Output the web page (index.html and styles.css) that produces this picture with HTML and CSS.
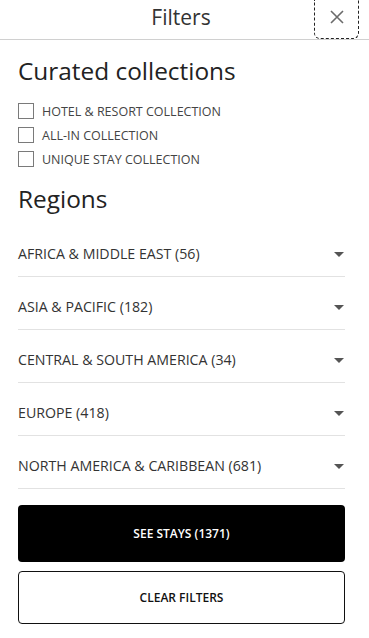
FILE: index.html
```html
<!DOCTYPE html>
<html lang="en">
<head>
<meta charset="utf-8">
<title>Filters</title>
<link rel="stylesheet" href="styles.css">
</head>
<body>
<div class="panel">
  <header class="header">
    <h1 class="title">Filters</h1>
    <button class="close" aria-label="Close">
      <svg width="14" height="14" viewBox="0 0 14 14"><path d="M1 1L13 13M13 1L1 13" stroke="#6b6b6b" stroke-width="1.6" fill="none"/></svg>
    </button>
  </header>
  <main class="content">
    <h2 class="heading">Curated collections</h2>
    <ul class="checks">
      <li class="check"><span class="box"></span><span class="check-label">HOTEL &amp; RESORT COLLECTION</span></li>
      <li class="check"><span class="box"></span><span class="check-label">ALL-IN COLLECTION</span></li>
      <li class="check"><span class="box"></span><span class="check-label">UNIQUE STAY COLLECTION</span></li>
    </ul>
    <h2 class="heading heading-regions">Regions</h2>
    <ul class="regions">
      <li class="region"><span>AFRICA &amp; MIDDLE EAST (56)</span><span class="caret"></span></li>
      <li class="region"><span>ASIA &amp; PACIFIC (182)</span><span class="caret"></span></li>
      <li class="region"><span>CENTRAL &amp; SOUTH AMERICA (34)</span><span class="caret"></span></li>
      <li class="region"><span>EUROPE (418)</span><span class="caret"></span></li>
      <li class="region"><span>NORTH AMERICA &amp; CARIBBEAN (681)</span><span class="caret"></span></li>
    </ul>
    <div class="actions">
      <button class="btn btn-primary">SEE STAYS (1371)</button>
      <button class="btn btn-secondary">CLEAR FILTERS</button>
    </div>
  </main>
</div>
</body>
</html>
```
FILE: styles.css
```css
* { box-sizing: border-box; }
html, body { margin: 0; padding: 0; background: #fff; }
body {
  font-family: "Open Sans", "Noto Sans", sans-serif;
  color: #222;
  width: 369px;
}
.header {
  position: relative;
  height: 40px;
  border-bottom: 1px solid #d0d0d0;
  display: flex;
  align-items: center;
  justify-content: center;
}
.title {
  margin: 0;
  font-size: 21px;
  font-weight: 400;
  line-height: 28px;
  color: #333;
  padding-right: 7px;
  padding-bottom: 5px;
}
.close {
  position: absolute;
  top: 0;
  right: 10px;
  width: 45px;
  height: 39px;
  border: 1px dashed #222;
  border-top: 0;
  border-radius: 0 0 6px 6px;
  background: transparent;
  padding: 0 0 5px 0;
  display: flex;
  align-items: center;
  justify-content: center;
}
.content {
  padding: 0 24px 0 18px;
}
.heading {
  margin: 15px 0 0 0;
  font-size: 24.4px;
  font-weight: 400;
  line-height: 32px;
  color: #222;
}
.heading-regions { margin-top: 12px; }
.checks {
  list-style: none;
  margin: 12px 0 0 0;
  padding: 0;
}
.check {
  display: flex;
  align-items: center;
  height: 24px;
}
.box {
  width: 16px;
  height: 16px;
  border: 1px solid #7a7a7a;
  margin-right: 8px;
  flex: none;
}
.check-label {
  font-size: 12.5px;
  color: #444;
}
.regions {
  list-style: none;
  margin: 9px 0 0 0;
  padding: 0;
}
.region {
  display: flex;
  align-items: center;
  justify-content: space-between;
  padding: 20px 0 12px 0;
  line-height: 20px;
  font-size: 14.2px;
  color: #333;
  border-bottom: 1px solid #e2e2e2;
}
.caret {
  width: 0;
  height: 0;
  border-left: 5px solid transparent;
  border-right: 5px solid transparent;
  border-top: 5px solid #555;
  margin-right: 1px;
}
.actions {
  display: flex;
  flex-direction: column;
  gap: 9px;
  margin-top: 16px;
}
.btn {
  font-family: "Open Sans", "Noto Sans", sans-serif;
  font-size: 12px;
  font-weight: 600;
  border-radius: 4px;
  width: 100%;
  cursor: pointer;
}
.btn-primary {
  height: 57px;
  background: #000;
  color: #fff;
  border: 0;
}
.btn-secondary {
  height: 53px;
  background: #fff;
  color: #111;
  border: 1px solid #111;
}
```
